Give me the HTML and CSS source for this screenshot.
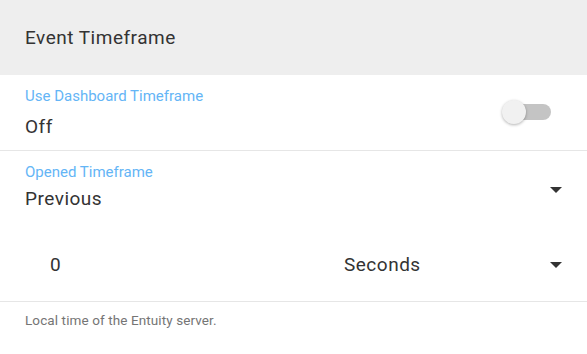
FILE: index.html
```html
<!DOCTYPE html>
<html lang="en">

<head>
    <meta charset="UTF-8">
    <meta name="viewport" content="width=device-width, initial-scale=1.0">
    <title>Event Timeframe</title>
    <link rel="stylesheet" href="styles.css">
</head>

<body>
    <div class="panel">
        <div class="panel-header">Event Timeframe</div>

        <div class="field field-toggle">
            <div class="field-text">
                <div class="field-label">Use Dashboard Timeframe</div>
                <div class="field-value value-off">Off</div>
            </div>
            <div class="switch">
                <span class="switch-track"></span>
                <span class="switch-knob"></span>
            </div>
        </div>

        <div class="field field-select">
            <div class="field-label">Opened Timeframe</div>
            <div class="select-row">
                <span class="field-value">Previous</span>
                <span class="caret caret-top"></span>
            </div>
            <div class="duration-row">
                <div class="duration-number field-value">0</div>
                <div class="duration-unit">
                    <span class="field-value">Seconds</span>
                    <span class="caret"></span>
                </div>
            </div>
        </div>

        <div class="hint">Local time of the Entuity server.</div>
    </div>
</body>

</html>
```

FILE: styles.css
```css
body {
    margin: 0;
    background: #fff;
    font-family: Roboto, 'Liberation Sans', sans-serif;
    color: #333;
}

.panel {
    width: 587px;
}

.panel-header {
    height: 75px;
    display: flex;
    align-items: center;
    padding: 0 25px;
    background: #eeeeee;
    font-size: 19px;
    letter-spacing: 0.5px;
    color: #333;
}

.field {
    padding: 13px 25px 0 25px;
    border-bottom: 1px solid #e6e6e6;
}

.field-label {
    font-size: 15px;
    line-height: 16px;
    color: #64b5f6;
}

.field-value {
    font-size: 19px;
    line-height: 24px;
    letter-spacing: 0.5px;
    color: #333;
}

.field-toggle {
    height: 76px;
    box-sizing: border-box;
    display: flex;
    justify-content: space-between;
    align-items: flex-start;
}

.value-off {
    margin-top: 11px;
}

.switch {
    position: relative;
    width: 49px;
    height: 24px;
    margin-top: 12px;
    margin-right: 11px;
}

.switch-track {
    position: absolute;
    left: 8px;
    top: 4px;
    width: 41px;
    height: 16px;
    border-radius: 8px;
    background: #c4c4c4;
}

.switch-knob {
    position: absolute;
    left: 0;
    top: 0;
    width: 24px;
    height: 24px;
    border-radius: 50%;
    background: #f1f1f1;
    box-shadow: 0 1px 3px rgba(0, 0, 0, 0.3);
}

.field-select {
    padding-bottom: 24px;
}

.select-row {
    display: flex;
    justify-content: space-between;
    align-items: flex-start;
    margin-top: 7px;
}

.caret {
    width: 0;
    height: 0;
    border-left: 6px solid transparent;
    border-right: 6px solid transparent;
    border-top: 6px solid #333;
}

.caret-top {
    margin-top: 0;
}

.duration-row {
    display: flex;
    align-items: center;
    margin-top: 42px;
}

.duration-number {
    width: 319px;
    padding-left: 25px;
    box-sizing: border-box;
}

.duration-unit {
    flex: 1;
    display: flex;
    justify-content: space-between;
    align-items: center;
}

.hint {
    padding: 10px 25px;
    font-size: 13.5px;
    line-height: 16px;
    letter-spacing: 0.1px;
    color: #757575;
}
```
